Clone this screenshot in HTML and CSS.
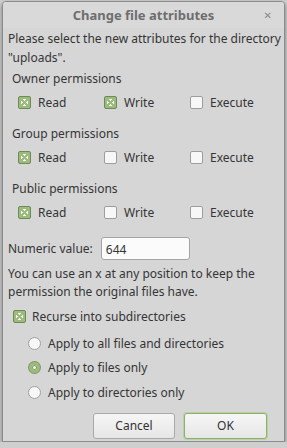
FILE: index.html
```html
<!DOCTYPE html>
<html lang="en">
<head>
    <meta charset="UTF-8">
    <title>Change file attributes</title>
    <link rel="stylesheet" href="styles.css">
</head>
<body>
    <div class="dialog">
        <div class="titlebar">
            <span class="title">Change file attributes</span>
            <span class="close">&#x2715;</span>
        </div>
        <div class="content">
            <p class="intro">Please select the new attributes for the directory "uploads".</p>

            <div class="group-label first">Owner permissions</div>
            <div class="perm-row">
                <label class="check"><span class="box on"></span>Read</label>
                <label class="check"><span class="box on"></span>Write</label>
                <label class="check"><span class="box"></span>Execute</label>
            </div>

            <div class="group-label">Group permissions</div>
            <div class="perm-row">
                <label class="check"><span class="box on"></span>Read</label>
                <label class="check"><span class="box"></span>Write</label>
                <label class="check"><span class="box"></span>Execute</label>
            </div>

            <div class="group-label">Public permissions</div>
            <div class="perm-row">
                <label class="check"><span class="box on"></span>Read</label>
                <label class="check"><span class="box"></span>Write</label>
                <label class="check"><span class="box"></span>Execute</label>
            </div>

            <div class="numeric">
                <span>Numeric value:</span>
                <span class="field">644</span>
            </div>
            <p class="hint">You can use an x at any position to keep the permission the original files have.</p>

            <label class="check recurse"><span class="box on"></span>Recurse into subdirectories</label>

            <div class="radios">
                <label class="radio"><span class="dot"></span>Apply to all files and directories</label>
                <label class="radio"><span class="dot on"></span>Apply to files only</label>
                <label class="radio"><span class="dot"></span>Apply to directories only</label>
            </div>

            <div class="buttons">
                <span class="btn">Cancel</span>
                <span class="btn default">OK</span>
            </div>
        </div>
    </div>
</body>
</html>
```

FILE: styles.css
```css
body { margin: 0; background: #cfcfcf; font-family: "Noto Sans", "DejaVu Sans", sans-serif; font-size: 12px; color: #353535; }
.dialog { margin: 1px 0 0 2px; width: 283px; height: 441px; box-sizing: border-box; background: #d6d6d6; border: 1px solid #8c8c8c; border-radius: 4px 4px 0 0; box-shadow: 0 2px 4px rgba(0,0,0,0.45); overflow: hidden; }
.titlebar { height: 26px; display: flex; align-items: center; justify-content: center; position: relative; background: #d9d9d9; }
.title { font-weight: bold; font-size: 13px; color: #6e6e6e; }
.close { position: absolute; right: 12px; top: 6px; font-size: 10px; font-weight: bold; color: #8a8a8a; }
.content { padding: 0 5px; }
p { margin: 0; }
.intro { line-height: 19px; margin: 1px -5px 0 0; }
.group-label { line-height: 19px; margin-top: 10px; padding-left: 4px; }
.group-label.first { margin-top: 2px; }
.perm-row { display: flex; height: 24px; align-items: center; margin-top: 2px; padding-left: 10px; }
.perm-row .check { width: 86px; }
.check { display: flex; align-items: center; gap: 7px; }
.box { width: 13px; height: 13px; box-sizing: border-box; border: 1px solid #9d9d9d; border-radius: 2px; background: #f7f7f7; }
.box.on { background: #9cbb7d; border-color: #6e8a58; position: relative; }
.box.on::after { content: ""; position: absolute; left: 2px; top: 2px; width: 7px; height: 7px; background:
    linear-gradient(45deg, transparent 38%, #9cbb7d 38%, #9cbb7d 62%, transparent 62%),
    linear-gradient(-45deg, transparent 38%, #9cbb7d 38%, #9cbb7d 62%, transparent 62%),
    #f4f7f0; }
.numeric { display: flex; align-items: center; gap: 8px; margin-top: 13px; }
.field { width: 89px; height: 23px; box-sizing: border-box; border: 1px solid #a4a4a4; border-radius: 3px; background: #fbfbfb; padding: 3px 0 0 4px; }
.hint { line-height: 18px; margin-top: 5px; }
.recurse { height: 20px; margin-top: 5px; padding-left: 5px; gap: 6px; }
.radios { margin-top: 5px; padding-left: 20px; }
.radio { display: flex; align-items: center; gap: 7px; height: 24.5px; }
.dot { width: 13px; height: 13px; box-sizing: border-box; border: 1px solid #a0a0a0; border-radius: 50%; background: #f7f7f7; }
.dot.on { background: #f4f7f0; border: 3px solid #9cbb7d; box-shadow: 0 0 0 1px #7c9862, inset 0 0 0 1px #7c9862; width: 11px; height: 11px; margin: 0 1px; }
.buttons { display: flex; justify-content: flex-end; gap: 9px; margin-top: 8px; padding-right: 12px; }
.btn { width: 82px; height: 26px; box-sizing: border-box; display: flex; align-items: center; justify-content: center; border: 1px solid #a9a9a9; border-radius: 3px; background: linear-gradient(#f6f6f6, #e6e6e6); color: #333; }
.btn.default { width: 83px; border-color: #8fae72; box-shadow: 0 0 0 1px #b8d19f; }
```
